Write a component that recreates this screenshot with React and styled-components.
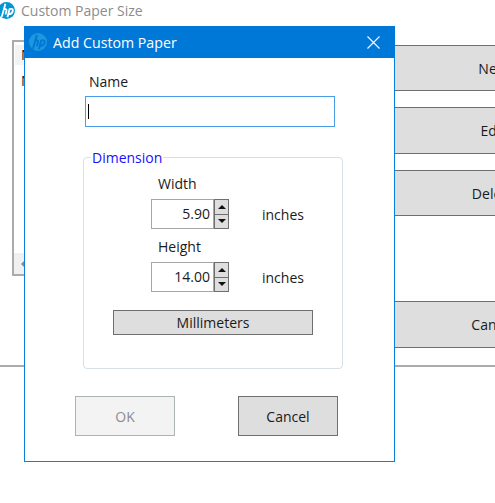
import React from 'react'
import styled, {createGlobalStyle} from 'styled-components'

const Global = createGlobalStyle`
  html, body {
    margin: 0;
    padding: 0;
    background: #fff;
    overflow: hidden;
  }
  * {
    box-sizing: border-box;
  }
`

const Page = styled.div`
  position: relative;
  width: 495px;
  height: 503px;
  overflow: hidden;
  background: #fff;
  font-family: "Open Sans", "Noto Sans", sans-serif;
  font-size: 14px;
  color: #1a1a1a;
`

const TitleRow = styled.header`
  display: flex;
  align-items: center;
  height: 20px;
  margin-left: -2px;
  gap: 6px;
`

const TitleText = styled.span`
  font-size: 14px;
  color: #8c8c8c;
  white-space: nowrap;
`

const Body = styled.main`
  display: flex;
  height: 347px;
  padding: 20px 0 0 12px;
  border-bottom: 2px solid #ababab;
`

const ListBox = styled.div`
  display: flex;
  flex-direction: column;
  flex: none;
  width: 200px;
  height: 236px;
  border: 2px solid #ababab;
`

const ListHead = styled.div`
  height: 20px;
  margin: 3px 0 0 1px;
  padding-left: 6px;
  background: #f3f3f3;
  line-height: 19px;
`

const ListRow = styled.div`
  flex: 1;
  padding: 6px 0 0 7px;
`

const ListScroll = styled.div`
  display: flex;
  align-items: center;
  height: 21px;
  padding-left: 7px;
  background: #f0f0f0;
`

const ScrollArrow = styled.i`
  display: block;
  width: 0;
  height: 0;
  border-top: 3px solid transparent;
  border-bottom: 3px solid transparent;
  border-right: 3px solid #8a8a8a;
`

const Actions = styled.div`
  display: flex;
  flex-direction: column;
  flex: none;
  width: 220px;
  margin-left: 171px;
  padding-top: 5px;
`

const SideButton = styled.button`
  flex: none;
  height: ${p => p.$h}px;
  margin-top: ${p => p.$top}px;
  padding: 0;
  border: solid #6f6f6f;
  border-width: 1px 0;
  background: #dedede;
  font: inherit;
  color: #1a1a1a;
`

const Dialog = styled.section`
  position: absolute;
  left: 24px;
  top: 26px;
  display: flex;
  flex-direction: column;
  width: 371px;
  height: 436px;
  background: #fff;
  border: 1px solid #0a7fdc;
`

const DialogBar = styled.div`
  display: flex;
  align-items: center;
  flex: none;
  height: 32px;
  margin: -1px -1px 0;
  padding: 0 15px 0 5px;
  background: #0078d7;
  color: #fff;
  font-size: 14.2px;
  gap: 6px;
`

const DialogTitle = styled.span`
  flex: 1;
`

const DialogBody = styled.div`
  display: flex;
  flex-direction: column;
  padding: 14px 0 0 58px;
`

const NameLabel = styled.label`
  height: 24px;
  padding-left: 6px;
  line-height: 19px;
`

const NameBox = styled.div`
  display: flex;
  align-items: center;
  width: 250px;
  height: 31px;
  margin-left: 2px;
  padding-left: 2px;
  border: 1px solid #4a9ce8;
`

const Caret = styled.i`
  display: block;
  width: 1px;
  height: 15px;
  background: #000;
`

const Group = styled.fieldset`
  display: flex;
  flex-direction: column;
  align-items: flex-start;
  width: 260px;
  height: 221px;
  margin: 21px 0 0 0;
  padding: 7px 0 0 67px;
  border: 1px solid #d6e0e8;
  border-radius: 4px;
`

const Legend = styled.legend`
  margin-left: -60px;
  padding: 0 1px;
  color: #1a0fff;
  line-height: 19px;
`

const FieldLabel = styled.div`
  height: 19px;
  margin-left: 7px;
  margin-top: ${p => p.$top}px;
  line-height: 19px;
`

const FieldRow = styled.div`
  display: flex;
  align-items: center;
  margin-top: 6px;
`

const NumberBox = styled.div`
  width: 63px;
  height: 30px;
  padding-right: 3px;
  border: 1px solid #a6a6a6;
  text-align: right;
  line-height: 28px;
`

const Spinner = styled.div`
  display: flex;
  flex-direction: column;
  width: 15px;
  height: 30px;
`

const SpinButton = styled.div`
  display: flex;
  align-items: center;
  justify-content: center;
  flex: 1;
  border: 1px solid #6f6f6f;
  background: #dedede;
  & + & {
    border-top: 0;
  }
`

const Arrow = styled.i`
  display: block;
  width: 0;
  height: 0;
  border-left: 4px solid transparent;
  border-right: 4px solid transparent;
  ${p => (p.$up ? 'border-bottom: 4px solid #111;' : 'border-top: 4px solid #111;')}
`

const Unit = styled.span`
  margin-left: 33px;
`

const WideButton = styled.button`
  width: 200px;
  height: 25px;
  margin: 18px 0 0 -38px;
  padding: 0;
  border: 1px solid #6f6f6f;
  background: #dedede;
  font: inherit;
  color: #1a1a1a;
`

const Footer = styled.div`
  display: flex;
  gap: 63px;
  margin: 27px 0 0 -8px;
`

const DialogButton = styled.button`
  width: 100px;
  height: 40px;
  padding: 0;
  border: 1px solid ${p => (p.disabled ? '#adb2b5' : '#6f6f6f')};
  background: ${p => (p.disabled ? '#f3f3f3' : '#dedede')};
  color: ${p => (p.disabled ? '#8c8c8c' : '#1a1a1a')};
  font: inherit;
`

const LogoSvg = styled.svg`
  flex: none;
`

function HpLogo({size, fill, cut}) {
  return (
    <LogoSvg width={size} height={size} viewBox="0 0 24 24">
      <circle cx="12" cy="12" r="12" fill={fill} />
      <path
        d="M10.500 2.500 5.300 21M7.700 11c1.700-1.300 4.700-1.400 4.400.9L10.500 17.500M13.300 21.500 16.300 10.200c2-.8 5.200-.8 4.700 1.800-.4 2.600-2.400 5.300-6.300 5.300"
        fill="none"
        stroke={cut}
        strokeWidth="2.600"
      />
    </LogoSvg>
  )
}

function NumberField({value}) {
  return (
    <FieldRow>
      <NumberBox>{value}</NumberBox>
      <Spinner>
        <SpinButton><Arrow $up /></SpinButton>
        <SpinButton><Arrow /></SpinButton>
      </Spinner>
      <Unit>inches</Unit>
    </FieldRow>
  )
}

export default function App() {
  return (
    <Page>
      <Global />
      <TitleRow>
        <HpLogo size={17} fill="#0096d6" cut="#fff" />
        <TitleText>Custom Paper Size</TitleText>
      </TitleRow>
      <Body>
        <ListBox>
          <ListHead>Name</ListHead>
          <ListRow>Name</ListRow>
          <ListScroll><ScrollArrow /></ListScroll>
        </ListBox>
        <Actions>
          <SideButton $h={46} $top={0}>New</SideButton>
          <SideButton $h={47} $top={16}>Edit</SideButton>
          <SideButton $h={46} $top={16}>Delete</SideButton>
          <SideButton $h={47} $top={85}>Cancel</SideButton>
        </Actions>
      </Body>
      <Dialog>
        <DialogBar>
          <HpLogo size={18} fill="#1f97dc" cut="#0078d7" />
          <DialogTitle>Add Custom Paper</DialogTitle>
          <svg width="13" height="13" viewBox="0 0 13 13">
            <path d="M.5.5l12 12M12.500.5l-12 12" stroke="#fff" strokeWidth="1.100" fill="none" />
          </svg>
        </DialogBar>
        <DialogBody>
          <NameLabel>Name</NameLabel>
          <NameBox><Caret /></NameBox>
          <Group>
            <Legend>Dimension</Legend>
            <FieldLabel $top={0}>Width</FieldLabel>
            <NumberField value="5.90" />
            <FieldLabel $top={8}>Height</FieldLabel>
            <NumberField value="14.00" />
            <WideButton>Millimeters</WideButton>
          </Group>
          <Footer>
            <DialogButton disabled>OK</DialogButton>
            <DialogButton>Cancel</DialogButton>
          </Footer>
        </DialogBody>
      </Dialog>
    </Page>
  )
}
